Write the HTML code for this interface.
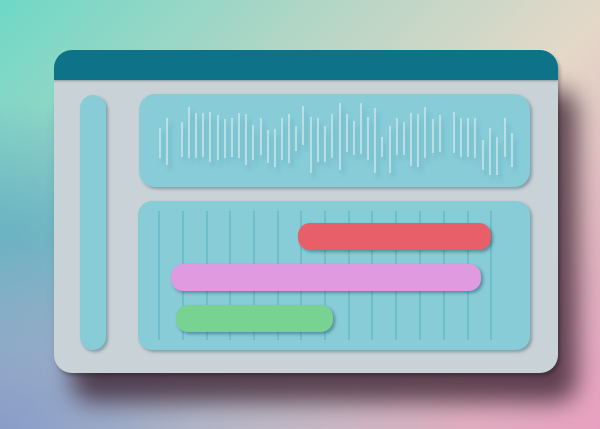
<!DOCTYPE html>
<html><head><meta charset="utf-8"><style>
html,body{margin:0;padding:0}
body{width:600px;height:429px;overflow:hidden;position:relative;
background:linear-gradient(135deg,#6ed8c6 0%,#b8d6c6 35%,#e4d8c8 60%,#e0b0c0 85%,#e8a0c0 100%);}
.bl{position:absolute;left:0;bottom:0;width:600px;height:429px;background:radial-gradient(ellipse at 0% 100%,rgba(130,150,200,0.9) 0%,rgba(130,150,200,0) 55%),radial-gradient(ellipse at 0% 55%,rgba(70,190,190,0.75) 0%,rgba(70,190,190,0) 40%)}
.shadow{position:absolute;left:72px;top:90px;width:505px;height:312px;border-radius:20px;background:#3e2434;filter:blur(12px);opacity:.8}
.win{position:absolute;left:54px;top:50px;width:504px;height:323px;border-radius:18px;background:#c9d3d7;overflow:hidden;box-shadow:2px 3px 3px rgba(0,0,0,.25)}
.hdr{position:absolute;left:0;top:0;width:504px;height:30px;background:#0e7289;box-shadow:0 1px 2px rgba(0,0,0,.3)}
.p{position:absolute;background:#88ccd8;box-shadow:2px 2px 3px rgba(0,50,70,.35)}
.bar{position:absolute;height:27px;border-radius:12px;box-shadow:2px 2px 3px rgba(0,50,70,.4)}
</style></head><body>
<div class="bl"></div>
<div class="shadow"></div>
<div class="win">
<div class="hdr"></div>
</div>
<div class="p" style="left:80px;top:95px;width:26px;height:255px;border-radius:13px"></div>
<div class="p" style="left:139px;top:94px;width:391px;height:93px;border-radius:16px"></div>
<div class="p" style="left:138px;top:201px;width:392px;height:149px;border-radius:14px"></div>
<svg style="position:absolute;left:0;top:0" width="600" height="429">
<defs><filter id="f" x="-10%" y="-10%" width="130%" height="140%"><feDropShadow dx="3" dy="5" stdDeviation="2.5" flood-color="#3a8ea4" flood-opacity=".7"/></filter></defs>
<g stroke="#4ea8bc" stroke-width="1" opacity=".8">
<line x1="159" y1="211" x2="159" y2="340"/><line x1="183" y1="211" x2="183" y2="340"/><line x1="207" y1="211" x2="207" y2="340"/><line x1="230" y1="211" x2="230" y2="340"/><line x1="254" y1="211" x2="254" y2="340"/><line x1="278" y1="211" x2="278" y2="340"/><line x1="301" y1="211" x2="301" y2="340"/><line x1="325" y1="211" x2="325" y2="340"/><line x1="349" y1="211" x2="349" y2="340"/><line x1="372" y1="211" x2="372" y2="340"/><line x1="396" y1="211" x2="396" y2="340"/><line x1="420" y1="211" x2="420" y2="340"/><line x1="444" y1="211" x2="444" y2="340"/><line x1="468" y1="211" x2="468" y2="340"/><line x1="491" y1="211" x2="491" y2="340"/>
</g>
<g stroke="#e4eef0" stroke-width="1.1" filter="url(#f)">
<line x1="160" y1="128" x2="160" y2="158"/><line x1="167" y1="118" x2="167" y2="165"/><line x1="182" y1="122" x2="182" y2="157"/><line x1="189" y1="107" x2="189" y2="158"/><line x1="196" y1="113" x2="196" y2="158"/><line x1="203" y1="113" x2="203" y2="157"/><line x1="210" y1="112" x2="210" y2="162"/><line x1="218" y1="115" x2="218" y2="160"/><line x1="225" y1="119" x2="225" y2="158"/><line x1="232" y1="118" x2="232" y2="157"/><line x1="239" y1="113" x2="239" y2="158"/><line x1="246" y1="114" x2="246" y2="165"/><line x1="253" y1="125" x2="253" y2="160"/><line x1="261" y1="118" x2="261" y2="155"/><line x1="268" y1="130" x2="268" y2="163"/><line x1="275" y1="129" x2="275" y2="167"/><line x1="282" y1="118" x2="282" y2="160"/><line x1="289" y1="114" x2="289" y2="163"/><line x1="296" y1="126" x2="296" y2="151"/><line x1="303" y1="106" x2="303" y2="145"/><line x1="311" y1="117" x2="311" y2="173"/><line x1="318" y1="118" x2="318" y2="162"/><line x1="325" y1="126" x2="325" y2="162"/><line x1="332" y1="114" x2="332" y2="158"/><line x1="340" y1="103" x2="340" y2="170"/><line x1="347" y1="114" x2="347" y2="152"/><line x1="354" y1="121" x2="354" y2="155"/><line x1="361" y1="103" x2="361" y2="154"/><line x1="368" y1="117" x2="368" y2="160"/><line x1="375" y1="108" x2="375" y2="173"/><line x1="382" y1="137" x2="382" y2="157"/><line x1="390" y1="126" x2="390" y2="173"/><line x1="397" y1="118" x2="397" y2="155"/><line x1="404" y1="122" x2="404" y2="155"/><line x1="411" y1="113" x2="411" y2="166"/><line x1="418" y1="114" x2="418" y2="167"/><line x1="425" y1="107" x2="425" y2="158"/><line x1="433" y1="119" x2="433" y2="153"/><line x1="440" y1="115" x2="440" y2="152"/><line x1="454" y1="112" x2="454" y2="153"/><line x1="461" y1="118" x2="461" y2="157"/><line x1="468" y1="118" x2="468" y2="157"/><line x1="475" y1="118" x2="475" y2="158"/><line x1="483" y1="140" x2="483" y2="170"/><line x1="490" y1="128" x2="490" y2="175"/><line x1="497" y1="137" x2="497" y2="175"/><line x1="505" y1="118" x2="505" y2="157"/><line x1="512" y1="133" x2="512" y2="167"/>
</g>
</svg>
<div class="bar" style="left:298px;top:223px;width:193px;background:#e85f6a"></div>
<div class="bar" style="left:171px;top:264px;width:310px;background:#e09ae0"></div>
<div class="bar" style="left:176px;top:305px;width:157px;background:#78d292"></div>
</body></html>
